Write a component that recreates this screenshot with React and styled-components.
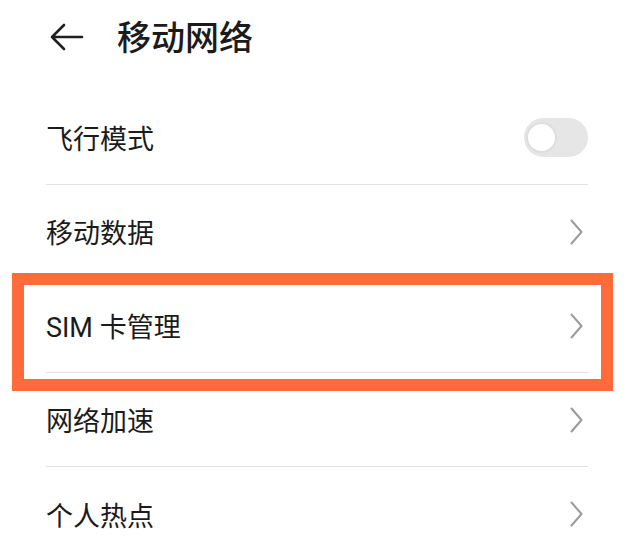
import React, { useState } from "react";
import styled, { createGlobalStyle } from "styled-components";

const GlobalStyle = createGlobalStyle`
  html, body {
    margin: 0;
    padding: 0;
    background: #ffffff;
  }
  body {
    font-family: Roboto, "Noto Sans CJK SC", "Noto Sans", sans-serif;
    color: #1b1b1b;
  }
`;

const Page = styled.div`
  width: 628px;
  height: 554px;
  overflow: hidden;
  background: #ffffff;
`;

const Header = styled.header`
  height: 91px;
  display: flex;
  align-items: center;
  padding: 0 0 17px 50px;
  box-sizing: border-box;
  gap: 33px;
`;

const BackButton = styled.button`
  border: none;
  background: none;
  padding: 0;
  display: flex;
  align-items: center;
  cursor: pointer;
`;

const Title = styled.h1`
  margin: 0;
  font-size: 34px;
  font-weight: 500;
  color: #1b1b1b;
  line-height: 1;
  padding-top: 2px;
`;

const List = styled.ul`
  list-style: none;
  margin: 0;
  padding: 0 40px 0 46px;
`;

const Row = styled.li`
  position: relative;
  height: 94px;
  display: flex;
  align-items: center;
  justify-content: space-between;
  border-bottom: ${(p) => (p.$last ? "none" : "1px solid #e2e2e2")};
  box-sizing: border-box;

  ${(p) =>
    p.$highlighted &&
    `
    &::after {
      content: "";
      position: absolute;
      top: -6px;
      bottom: -19px;
      left: -34px;
      right: -25px;
      border: 12px solid #ff6b3b;
      pointer-events: none;
    }
  `}
`;

const Label = styled.span`
  font-size: 27px;
  line-height: 1;
  color: #1b1b1b;
  padding-top: 6px;
`;

const Chevron = styled.svg`
  margin-right: 5px;
  flex-shrink: 0;
`;

const Track = styled.button`
  width: 64px;
  height: 39px;
  border-radius: 20px;
  border: none;
  padding: 0;
  background: #e6e6e6;
  display: flex;
  align-items: center;
  padding-left: 2px;
  cursor: pointer;
`;

const Knob = styled.span`
  width: 31px;
  height: 31px;
  border-radius: 50%;
  background: #ffffff;
  border: 2px solid #dedede;
  box-sizing: border-box;
`;

const ArrowLeft = () => (
  <svg width="34" height="28" viewBox="0 0 34 28" fill="none">
    <path
      d="M32 14H2M14 2L2 14l12 12"
      stroke="#1f1f1f"
      strokeWidth="2.6"
      strokeLinecap="round"
      strokeLinejoin="round"
    />
  </svg>
);

const ChevronRight = () => (
  <Chevron width="13" height="26" viewBox="0 0 13 26" fill="none">
    <path
      d="M1.5 1.5L11.5 13L1.5 24.5"
      stroke="#9b9b9b"
      strokeWidth="2"
      strokeLinecap="round"
      strokeLinejoin="round"
    />
  </Chevron>
);

const items = [
  { id: "airplane", label: "飞行模式", type: "switch" },
  { id: "data", label: "移动数据" },
  { id: "sim", label: "SIM 卡管理", highlighted: true },
  { id: "speed", label: "网络加速" },
  { id: "hotspot", label: "个人热点" },
];

function App() {
  const [airplane, setAirplane] = useState(false);

  return (
    <Page>
      <GlobalStyle />
      <Header>
        <BackButton aria-label="返回">
          <ArrowLeft />
        </BackButton>
        <Title>移动网络</Title>
      </Header>
      <List>
        {items.map((item, i) => (
          <Row
            key={item.id}
            $highlighted={item.highlighted}
            $last={i === items.length - 1}
          >
            <Label>{item.label}</Label>
            {item.type === "switch" ? (
              <Track onClick={() => setAirplane(!airplane)}>
                <Knob />
              </Track>
            ) : (
              <ChevronRight />
            )}
          </Row>
        ))}
      </List>
    </Page>
  );
}

export default App;
